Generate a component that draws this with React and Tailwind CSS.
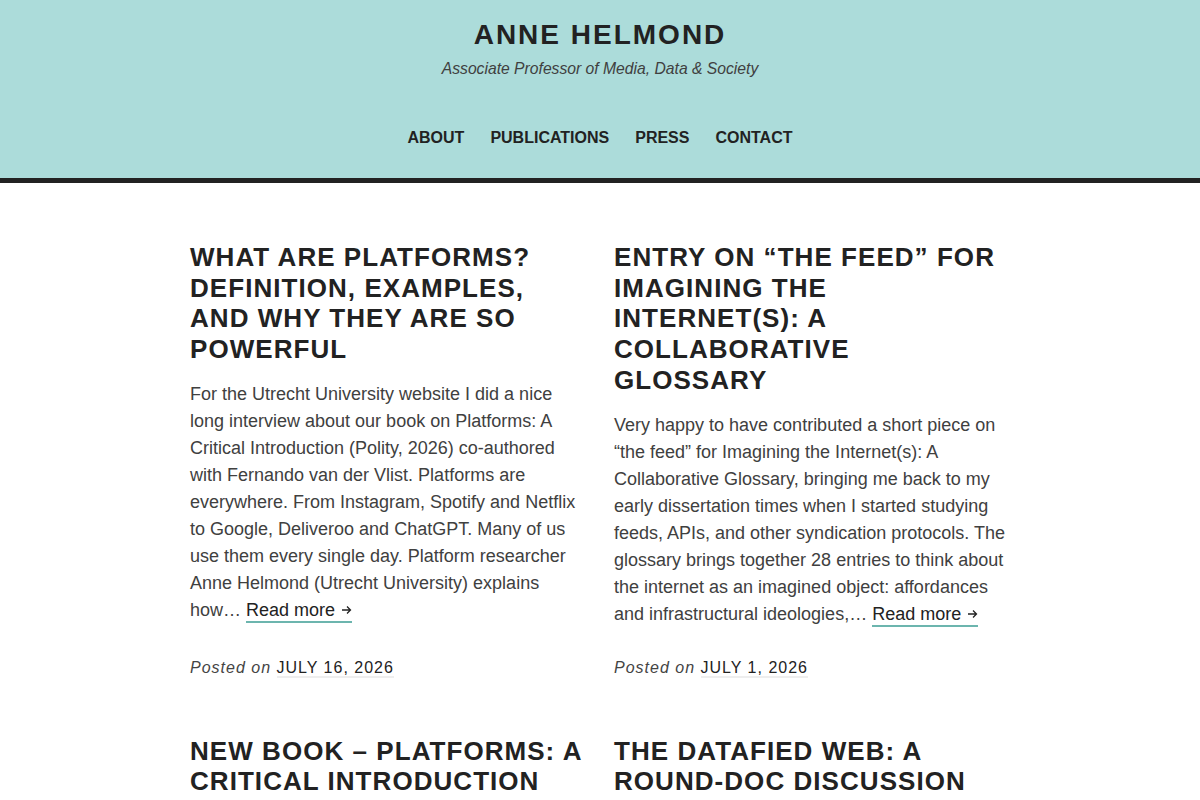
import React from 'react';

// Navigation entries shown under the site title
const navItems = ['About', 'Publications', 'Press', 'Contact'];

// Recent posts listed on the front page
const posts = [
  {
    title: 'What are platforms? Definition, examples, and why they are so powerful',
    excerpt:
      'For the Utrecht University website I did a nice long interview about our book on Platforms: A Critical Introduction (Polity, 2026) co-authored with Fernando van der Vlist. Platforms are everywhere. From Instagram, Spotify and Netflix to Google, Deliveroo and ChatGPT. Many of us use them every single day. Platform researcher Anne Helmond (Utrecht University) explains how…',
    date: 'July 16, 2026',
  },
  {
    title: 'Entry on \u201cThe Feed\u201d for Imagining the Internet(s): A Collaborative Glossary',
    excerpt:
      'Very happy to have contributed a short piece on \u201cthe feed\u201d for Imagining the Internet(s): A Collaborative Glossary, bringing me back to my early dissertation times when I started studying feeds, APIs, and other syndication protocols. The glossary brings together 28 entries to think about the internet as an imagined object: affordances and infrastructural ideologies,…',
    date: 'July 1, 2026',
  },
  {
    title: 'New book \u2013 Platforms: A Critical Introduction',
    excerpt: '',
    date: '',
  },
  {
    title: 'The Datafied Web: A Round-Doc Discussion',
    excerpt: '',
    date: '',
  },
];

// Small arrow after "Read more"
const Arrow = () => (
  <svg width="11" height="10" viewBox="0 0 11 10" className="inline-block ml-[6px] -mt-[2px]" fill="none" stroke="#222" strokeWidth="1.3">
    <path d="M1 5h8.5M6 1.5L9.5 5 6 8.5" />
  </svg>
);

// Single post summary card
const PostCard = ({ post }) => (
  <article className="flex flex-col pb-[56px]">
    <h2 className="text-[26px] leading-[30.7px] font-bold uppercase tracking-[1.05px] text-[#222]">
      {post.title}
    </h2>
    {post.excerpt && (
      <p className="mt-[16px] text-[18px] leading-[27px] text-[#404040]">
        {post.excerpt}{' '}
        <a href="#" className="text-[#222] border-b-2 border-[#6cb5ae] pb-[1px]">
          Read more<Arrow />
        </a>
      </p>
    )}
    {post.date && (
      <div className="mt-auto pt-[28px] text-[16px] leading-[24px] tracking-[1px] text-[#444]">
        <span className="italic">Posted on </span>
        <a href="#" className="uppercase text-[#222] border-b-2 border-[#eee]">
          {post.date}
        </a>
      </div>
    )}
  </article>
);

export default function App() {
  return (
    <div className="min-h-screen bg-white" style={{ fontFamily: '"Liberation Sans", Arial, sans-serif' }}>
      {/* Site header with title, tagline and main menu */}
      <header className="bg-[#acdcda] border-b-[5px] border-[#222]">
        <div className="flex flex-col items-center pt-[18px]">
          <h1 className="text-[28px] leading-[34px] font-bold tracking-[2px] text-[#222]">ANNE HELMOND</h1>
          <p className="mt-[7px] text-[15.7px] leading-[20px] italic text-[#404040]">
            Associate Professor of Media, Data &amp; Society
          </p>
        </div>
        <nav className="flex justify-center pt-[49px] pb-[30px]">
          {navItems.map((item) => (
            <a key={item} href="#" className="px-[13px] text-[16px] leading-[20px] font-bold uppercase text-[#222]">
              {item}
            </a>
          ))}
        </nav>
      </header>

      {/* Post grid */}
      <main className="mx-auto w-[820px] pt-[59px] grid grid-cols-[392px_392px] gap-x-[32px]">
        {posts.map((post) => (
          <PostCard key={post.title} post={post} />
        ))}
      </main>
    </div>
  );
}
